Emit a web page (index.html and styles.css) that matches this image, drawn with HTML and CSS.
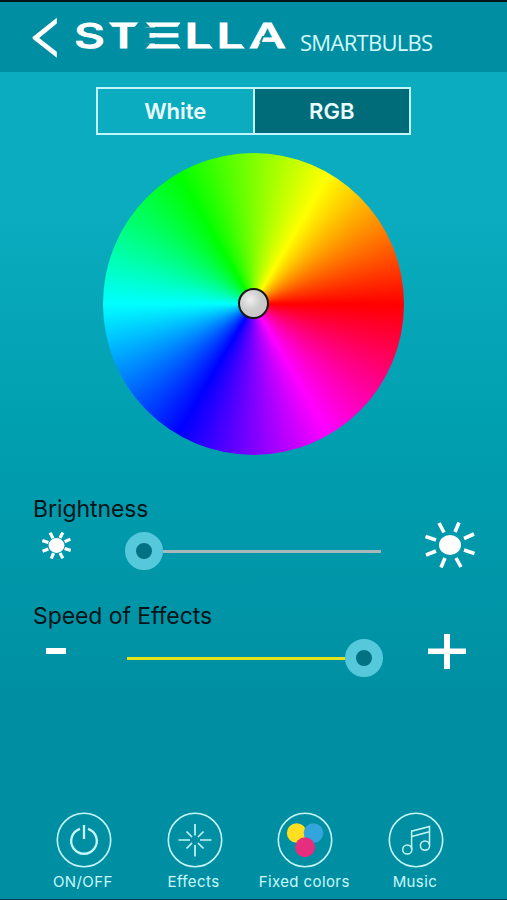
FILE: index.html
```html
<!DOCTYPE html>
<html lang="en">
<head>
<meta charset="utf-8">
<title>Stella Smartbulbs</title>
<link rel="stylesheet" href="styles.css">
</head>
<body>
<div class="app">
  <header class="header">
    <svg class="back" viewBox="0 0 26 42"><path d="M24.800 .7v5.800L7.200 20.900 24.800 34.800v6L.6 21.700v-1.800z" fill="#fff"/></svg>
    <svg class="logo" viewBox="0 -12 216 60" aria-label="STELLA">
      <g class="letters">
        <text x="0" y="31" textLength="31" lengthAdjust="spacingAndGlyphs">S</text>
        <text x="32.500" y="31" textLength="34" lengthAdjust="spacingAndGlyphs">T</text>
        <text x="66" y="31" textLength="44" lengthAdjust="spacingAndGlyphs">E</text>
        <text x="110" y="31" textLength="31" lengthAdjust="spacingAndGlyphs">L</text>
        <text x="142" y="31" textLength="31" lengthAdjust="spacingAndGlyphs">L</text>
        <text x="175" y="31" textLength="37" lengthAdjust="spacingAndGlyphs">A</text>
      </g>
      <g class="cuts">
        <path d="M68 10.600H84V16H68zM68 20.700H84V26.500H68zM68 15H75.500V22H68z"/>
        <path d="M68 4V10.600H76.500L70.500 4zM68 33V26.300H76.500L70.500 33zM110 4V10.900H102.500L108 4zM110 33V26.100H102.500L108 33z"/>
        <path d="M32 4V11.200H39.500L33.500 4zM67 4V11.200H59.500L65.500 4z"/>
        <path d="M142 33V26H134.500L140 33zM174 33V26H166.500L172 33z"/>
        <path d="M188.200 19H190.200L187.600 25.500H185.300z"/>
      </g>
    </svg>
    <span class="product">SMARTBULBS</span>
  </header>

  <main class="main">
    <div class="tabs">
      <div class="tab">White</div>
      <div class="tab active">RGB</div>
    </div>
    <div class="wheel"><div class="picker"></div></div>

    <section class="control">
      <div class="label">Brightness</div>
      <div class="row">
        <div class="side"><svg class="sun-small" viewBox="-25 -23 50 46"><g stroke-width="5.500"><ellipse rx="11" ry="10"/><path d="M-11-22l5 9.500M11-22.500L6-13M14-6.500l10-4.500M14 5l10.500 3.500M6 13l5 9M-5 13l-4 9.500M-14 6l-10 4M-14-5l-10.500-3.500"/></g></svg></div>
        <div class="slider low"><div class="track"></div><div class="thumb"></div></div>
        <div class="side"><svg class="sun-large" viewBox="-25 -23 50 46">
          <ellipse rx="11" ry="10"/><path d="M-11-22l5 9.500M9-22.500L5-13M14-6.500l10-4.500M14 5l10.500 3.500M6 13l5 9M-5 13l-4 9.500M-14 6l-10 4M-14-5l-10.500-3.500" stroke-width="3.600"/>
        </svg></div>
      </div>
    </section>

    <section class="control speed">
      <div class="label">Speed of Effects</div>
      <div class="row">
        <div class="side"><svg class="minus" viewBox="0 0 20 6"><path d="M0 0h20v6H0z"/></svg></div>
        <div class="slider high"><div class="track"></div><div class="thumb"></div></div>
        <div class="side"><svg class="plus" viewBox="0 0 38 35"><path d="M16 0h6v14.500h16v5.500H22v15h-6V20H0v-5.500h16z"/></svg></div>
      </div>
    </section>
  </main>

  <nav class="nav">
    <div class="item">
      <svg viewBox="-28 -28 56 56"><circle r="26.700" stroke-width="1.600"/><path d="M-4-11.200a12.800 12.800 0 1 0 8 0M0-15V-1" stroke-width="2.300"/></svg>
      <span>ON/OFF</span>
    </div>
    <div class="item">
      <svg viewBox="-28 -28 56 56"><circle r="26.700" stroke-width="1.600"/><path d="M0-16v11.500M0 5v11.500M-16.500 0h11.500M5 0h11.500M-8.500-8.500l5.500 5.500M8.500-8.500L3-3M-8.500 8.500L-3 3M8.500 8.500L3 3" stroke-width="1.700"/></svg>
      <span>Effects</span>
    </div>
    <div class="item">
      <svg viewBox="-28 -28 56 56"><circle r="26.700" stroke-width="1.600"/><g stroke="none"><circle cx="-8.300" cy="-7" r="9.800" fill="#ffdf20"/><circle cx="8.500" cy="-7" r="9.800" fill="#31a5dc"/><circle cx="0" cy="7.300" r="10" fill="#e72d7d"/></g></svg>
      <span>Fixed colors</span>
    </div>
    <div class="item">
      <svg viewBox="-28 -28 56 56"><circle r="26.700" stroke-width="1.600"/><g stroke-width="1.500"><circle cx="-8.700" cy="9.500" r="4.600"/><circle cx="9" cy="5.600" r="4.600"/><path d="M-4.400 9V-8.800L13.500-13.500V5M-4.400-3.500L13.500-8.200"/></g></svg>
      <span>Music</span>
    </div>
  </nav>
</div>
</body>
</html>
```
FILE: styles.css
```css
* { box-sizing: border-box; }
body { margin: 0; font-family: Inter, "Liberation Sans", sans-serif; }
svg { display: block; flex: none; }
.app {
  width: 507px; height: 900px; display: flex; flex-direction: column; overflow: hidden;
  border-top: 2px solid #021416; border-bottom: 1px solid #043c44;
  background: linear-gradient(#0bacbf 0, #0bacbf 210px, #009fb0 430px, #008fa2 700px, #008fa2 100%);
}
.header { height: 70px; flex: none; background: #008fa2; display: flex; align-items: flex-start; padding-left: 32px; }
.back { width: 26px; height: 42px; margin-top: 15px; }
.logo { width: 216px; height: 60px; margin: 3px 0 0 16px; overflow: visible; }
.letters { fill: #fff; stroke: #fff; stroke-width: .9px; font-size: 34.5px; font-weight: 500; }
.cuts { fill: #008fa2; }
.product { margin: 23px 0 0 10px; font: 22px/34px "Open Sans", sans-serif; color: #d5faff; letter-spacing: -.7px; }
.main { flex: 1; }
.tabs { width: 315px; height: 48px; margin: 15px auto 0; border: 2px solid #c2f6fa; display: flex; }
.tab { flex: 1; color: #e9fdff; font-size: 22px; font-weight: 600; line-height: 44px; text-align: center; }
.active { background: #006c79; border-left: 2px solid #c2f6fa; }
.wheel {
  width: 301px; height: 302px; margin: 18px auto 0; border-radius: 50%; display: grid; place-items: center;
  background: conic-gradient(from 90deg, #f00, #f0f, #00f, #0ff, #0f0, #ff0, #f00);
}
.picker { width: 31px; height: 31px; margin-bottom: 1px; border: 2.5px solid #161616; border-radius: 50%; background: radial-gradient(circle at 38% 36%, #eee, #ccc 45%, #c2c2c2); }
.control { margin-top: 39px; height: 84px; }
.speed { margin-top: 23px; }
.label { font-size: 23px; line-height: 30px; padding-left: 33px; color: #041519; white-space: nowrap; letter-spacing: -.08px; }
.row { display: flex; height: 50px; align-items: center; }
.side { width: 112px; display: flex; justify-content: center; padding-bottom: 8px; fill: #fff; stroke: #fff; stroke-width: 0; }
.slider { width: 256px; margin: 0 12.5px 0 13px; display: flex; align-items: center; padding-top: 4px; }
.high { margin: 0 8px 0 14.5px; }
.track { height: 3px; flex: 1; background: #a8b8bb; }
.thumb { width: 38px; height: 38px; border-radius: 50%; border: 11px solid #56c8dc; background: #027282; flex: none; }
.low .thumb { order: -1; }
.high .track { background: #e4e41c; }
.sun-small { width: 29px; height: 27px; }
.sun-large { width: 50px; height: 46px; }
.minus { width: 20px; height: 6px; }
.plus { width: 38px; height: 35px; }
.speed .side { padding-bottom: 10px; }
.nav { display: flex; height: 87px; flex: none; padding-left: 28.5px; }
.item { width: 110.7px; display: flex; flex-direction: column; align-items: center; fill: none; stroke: #c5f6fa; color: #c9f7fc; }
.item svg { width: 56px; height: 56px; }
.item span { font-size: 15px; line-height: 20px; margin: 4px 2px 0 0; letter-spacing: .4px; white-space: nowrap; }
```
